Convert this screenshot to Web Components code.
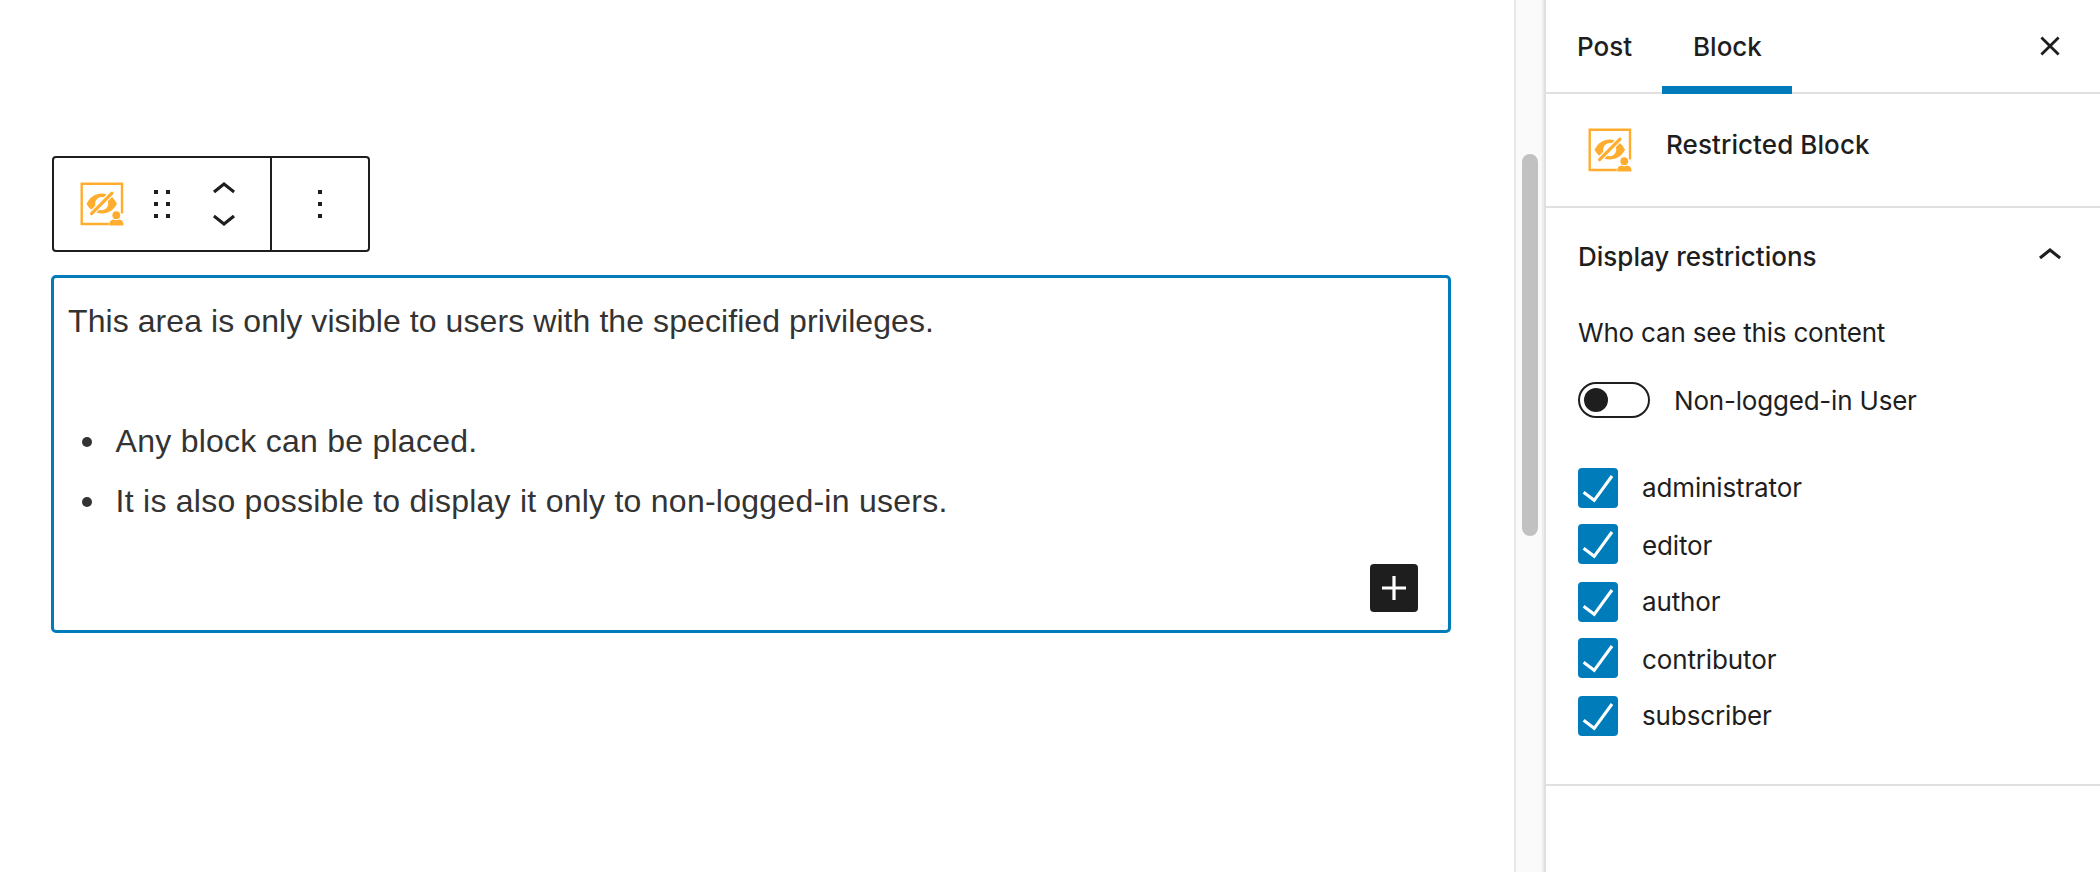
<!DOCTYPE html>
<html lang="en"><head><meta charset="utf-8"><title>Restricted Block editor</title>
<style>
body{margin:0;background:#fff}
</style></head><body>
<editor-app></editor-app>
<script>
const define=(name,html)=>customElements.define(name,class extends HTMLElement{
  constructor(){super();const t=document.createElement('template');t.innerHTML=html;
    this.attachShadow({mode:'open'}).append(t.content.cloneNode(true));}
});

define('restricted-icon',`<style>:host{display:block;width:44px;height:44px}svg{display:block}</style>
<svg width="44" height="44" viewBox="0 0 44 44" fill="#ffad2e">
<path d="M28.800 42H1.700V1.700H42V31.500" fill="none" stroke="#ffad2e" stroke-width="2.400"/>
<path d="M6.500 21.700C10 15.200 15 11.500 21.700 11.500C28.500 11.500 33.500 15.200 37 21.700C33.500 28.200 28.500 31.400 21.700 31.400C15 31.400 10 28.200 6.500 21.700Z"/>
<circle cx="21.700" cy="21.700" r="6.600" fill="#fff"/>
<path d="M9.500 33.500L33.500 9.500" stroke="#fff" stroke-width="5.600"/>
<path d="M11.600 31.700L32 11.100" stroke="#ffad2e" stroke-width="3.200" stroke-linecap="round"/>
<circle cx="36.300" cy="33.200" r="4.800" fill="#fff"/><circle cx="36.300" cy="33.200" r="3.900"/>
<path d="M29.300 43.400V42C29.300 39.300 31.500 38 33.500 37.600Q36.400 38.800 39.300 37.600C41.300 38 43.400 39.300 43.400 42V43.400Z"/>
</svg>`);

define('chevron-icon',`<style>:host{display:block;width:48px;height:48px}:host([down]) svg{transform:rotate(180deg)}svg{display:block}</style>
<svg width="48" height="48" viewBox="0 0 24 24" fill="#1e1e1e"><path d="M6.500 12.400L12 8l5.500 4.400-.9 1.200L12 10l-4.500 3.600-1-1.200z"/></svg>`);

define('dot-grid',`<style>:host{display:grid;grid-template-columns:repeat(2,4px);grid-auto-rows:4px;gap:8px}
:host([single]){grid-template-columns:4px}:host([single]) .b{display:none}i{background:#1e1e1e}</style>
<i></i><i class="b"></i><i></i><i class="b"></i><i></i><i class="b"></i>`);

define('block-toolbar',`<style>:host{display:flex;box-sizing:border-box;width:318px;height:96px;border:2px solid #1e1e1e;border-radius:4px;background:#fff}
.main{display:flex;align-items:center;width:216px;border-right:2px solid #1e1e1e;box-sizing:content-box}
restricted-icon{margin-left:26px}
.drag{margin-left:30px}
.movers{display:flex;flex-direction:column;justify-content:center;margin-left:30px}
.movers chevron-icon[down]{margin-top:-20px}
.more{flex:1;display:flex;align-items:center;justify-content:center}
</style>
<div class="main"><restricted-icon></restricted-icon><dot-grid class="drag"></dot-grid>
<div class="movers"><chevron-icon></chevron-icon><chevron-icon down></chevron-icon></div></div>
<div class="more"><dot-grid single></dot-grid></div>`);

define('block-content',`<style>:host{display:block;box-sizing:border-box;width:1400px;height:358px;margin-top:23px;border:3px solid #007cba;border-radius:5px;
font:32px/60px "Liberation Sans",Arial,sans-serif;color:#333;padding:13px 30px 18px 14px}
p{margin:0 0 60px;letter-spacing:.08px}ul{margin:0;padding:0;list-style:none}
li{display:flex;align-items:center;letter-spacing:.25px}li::before{content:"";width:10px;height:10px;border-radius:50%;background:#333;margin:2px 23.600px 0 14px}
.add{width:48px;height:48px;border-radius:4px;background:#1e1e1e;margin:33px 0 0 auto}.add svg{display:block}
</style>
<p><span>This area is only visible to users with the specified privileges.</span></p>
<ul><li><span>Any block can be placed.</span></li><li><span>It is also possible to display it only to non-logged-in users.</span></li></ul>
<div class="add"><svg width="48" height="48" viewBox="0 0 24 24" fill="#fff"><path d="M18 11.200h-5.200V6h-1.600v5.200H6v1.600h5.200V18h1.600v-5.200H18z"/></svg></div>`);

define('editor-canvas',`<style>:host{display:block;box-sizing:border-box;width:1514px;height:872px;padding:156px 0 0 51px}block-toolbar{margin-left:1px}</style>
<block-toolbar></block-toolbar><block-content></block-content>`);

define('scroll-track',`<style>:host{display:block;box-sizing:border-box;width:30px;height:872px;background:#fafafa;border-left:2px solid #e8e8e8;border-right:2px solid #ececec;padding:154px 4px 0 6px}
div{width:16px;height:382px;border-radius:8px;background:#c1c1c1}</style><div></div>`);

define('role-check',`<style>:host{display:flex;align-items:center;height:57px;letter-spacing:-.13px}
:host(:nth-of-type(even)) .box{margin-top:-2px}:host(:nth-of-type(even)) span{margin-top:2px}
.box{width:40px;height:40px;border-radius:4px;background:#007cba;margin-right:24px}svg{display:block}</style>
<div class="box"><svg width="40" height="40" viewBox="0 0 40 40" fill="none" stroke="#fff" stroke-width="3.100"><path d="M5.600 24.300L16.200 32.300L34 8"/></svg></div><span><slot></slot></span>`);

define('toggle-switch',`<style>:host{display:flex;align-items:center;height:36px;letter-spacing:-.2px}span{margin-top:2px}
.t{box-sizing:border-box;width:72px;height:36px;border:2px solid #1e1e1e;border-radius:18px;padding:4px;margin-right:24px}
.t i{display:block;width:24px;height:24px;border-radius:50%;background:#1e1e1e}</style><div class="t"><i></i></div><span><slot></slot></span>`);

define('settings-sidebar',`<style>:host{display:block;box-sizing:border-box;width:556px;height:872px;border-left:2px solid #e0e0e0;background:#fff;
font:26px/36px Inter,"Liberation Sans",sans-serif;color:#1e1e1e}
header{display:flex;box-sizing:border-box;height:94px;border-bottom:2px solid #e0e0e0;font-weight:500}
.tab{box-sizing:border-box;height:94px;line-height:94px;flex:none}
.post{width:116px;padding-left:31px}.block{width:130px;padding-left:31px;box-shadow:inset 0 -8px #007cba}
.close{margin:22px 26px 0 auto;height:48px}
.card{display:flex;box-sizing:border-box;height:114px;border-bottom:2px solid #e0e0e0;padding:34px 0 0 42px;font-weight:500}
.card span{margin:-1px 0 0 34px;letter-spacing:.08px}
.panel{box-sizing:border-box;height:578px;border-bottom:2px solid #e0e0e0;padding:31px 26px 0 32px}
.head{display:flex;justify-content:space-between;font-weight:500;height:36px}
.head chevron-icon{margin-top:-7px}
.who{margin-top:40px;height:36px;letter-spacing:-.2px}
toggle-switch{margin:31px 0 41px}
</style>
<header><div class="tab post"><span>Post</span></div><div class="tab block"><span>Block</span></div>
<svg class="close" width="48" height="48" viewBox="0 0 24 24"><path d="M7.700 7.700L16.300 16.300M16.300 7.700L7.700 16.300" stroke="#1e1e1e" stroke-width="1.400" fill="none"/></svg></header>
<div class="card"><restricted-icon></restricted-icon><span>Restricted Block</span></div>
<div class="panel"><div class="head"><span>Display restrictions</span><chevron-icon></chevron-icon></div>
<div class="who"><span>Who can see this content</span></div>
<toggle-switch>Non-logged-in User</toggle-switch>
<role-check>administrator</role-check><role-check>editor</role-check><role-check>author</role-check><role-check>contributor</role-check><role-check>subscriber</role-check></div>`);

define('editor-app',`<style>:host{display:flex;width:2100px;height:872px;overflow:hidden}</style>
<editor-canvas></editor-canvas><scroll-track></scroll-track><settings-sidebar></settings-sidebar>`);
</script></body></html>
